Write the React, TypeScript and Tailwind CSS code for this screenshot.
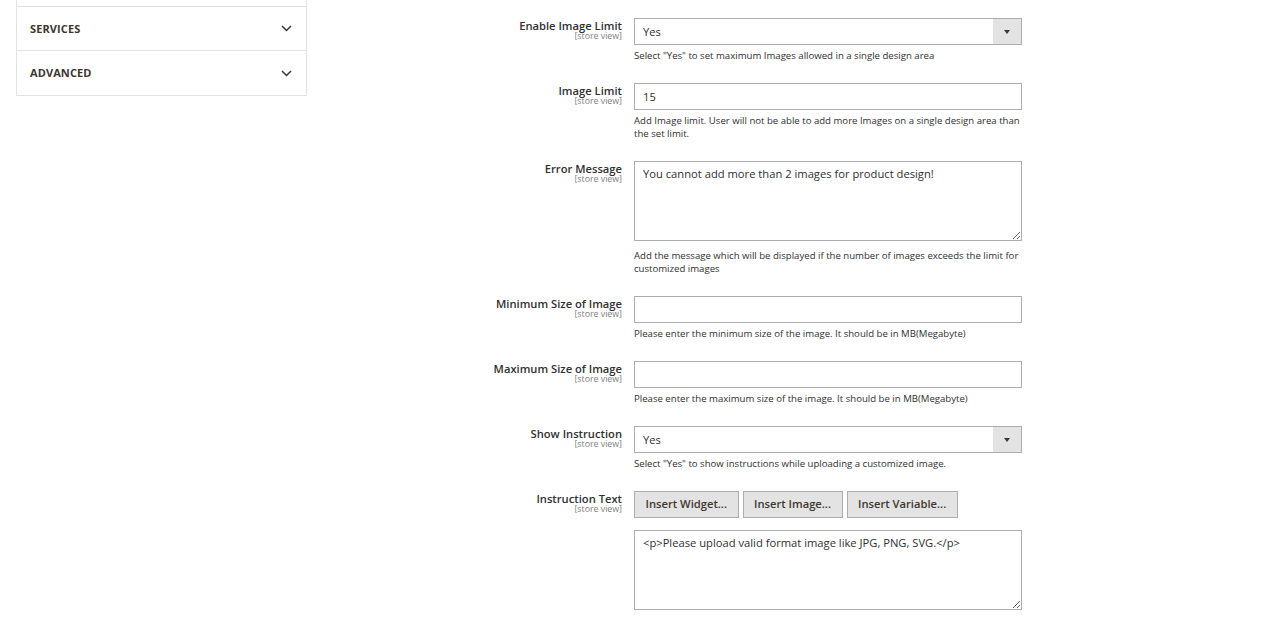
import React from "react";

const font = { fontFamily: '"Open Sans", "Liberation Sans", sans-serif' };

function Chevron() {
  return (
    <svg width="11" height="7" viewBox="0 0 11 7" className="text-[#41362f]">
      <polyline points="1,1 5.5,5.5 10,1" fill="none" stroke="currentColor" strokeWidth="1.5" />
    </svg>
  );
}

function Label({ text }: { text: string }) {
  return (
    <div className="w-[315px] shrink-0 text-right pt-[2px]">
      <div className="text-[11.2px] leading-[12px] font-semibold text-[#303030]">{text}</div>
      <div className="text-[8.8px] leading-[9px] text-[#808080]">[store view]</div>
    </div>
  );
}

function Note({ children }: { children: React.ReactNode }) {
  return <div className="mt-[4px] text-[9.6px] leading-[13px] text-[#303030]">{children}</div>;
}

function Select({ value }: { value: string }) {
  return (
    <div className="flex h-[27px] w-[388px] border border-[#adadad] bg-white">
      <div className="flex-1 flex items-center pl-[8px] pt-[1px] text-[11.2px] text-[#303030]">{value}</div>
      <div className="w-[28px] bg-[#e3e3e3] flex items-center justify-center">
        <svg width="6" height="4" viewBox="0 0 6 4">
          <polygon points="0,0 6,0 3,4" fill="#41362f" />
        </svg>
      </div>
    </div>
  );
}

function Input({ value }: { value?: string }) {
  return (
    <div className="flex items-center h-[27px] w-[388px] border border-[#adadad] bg-white pl-[8px] pt-[1px] text-[11.2px] text-[#303030]">
      {value}
    </div>
  );
}

function TextArea({ value }: { value: string }) {
  return (
    <textarea
      readOnly
      defaultValue={value}
      className="block h-[80px] w-[388px] border border-[#adadad] bg-white pl-[8px] pr-[8px] pt-[4px] text-[11.2px] leading-[15px] text-[#303030] outline-none"
      style={font}
    />
  );
}

function Btn({ text }: { text: string }) {
  return (
    <div className="h-[27px] flex items-center px-[10.5px] border border-[#adadad] bg-[#e3e3e3] text-[11.2px] font-semibold text-[#41362f]">
      {text}
    </div>
  );
}

export default function App() {
  return (
    <div className="flex w-full h-[620px] bg-white overflow-hidden" style={font}>
      <div className="ml-4 w-[291px] shrink-0 self-start border-x border-b border-[#e3e3e3]">
        <div className="h-[6px]" />
        <div className="h-[44px] border-t border-[#e3e3e3] flex items-center justify-between pl-[13px] pr-[14px]">
          <span className="text-[11px] font-bold text-[#41362f] tracking-[0.1px] pt-[2px]">SERVICES</span>
          <Chevron />
        </div>
        <div className="h-[45px] border-t border-[#e3e3e3] flex items-center justify-between pl-[13px] pr-[14px]">
          <span className="text-[11px] font-bold text-[#41362f] tracking-[0.1px]">ADVANCED</span>
          <Chevron />
        </div>
      </div>

      <div className="flex flex-col pt-[18px]">
        <div className="flex mb-[21px]">
          <Label text="Enable Image Limit" />
          <div className="ml-[12px]">
            <Select value="Yes" />
            <Note>Select "Yes" to set maximum Images allowed in a single design area</Note>
          </div>
        </div>

        <div className="flex mb-[21px]">
          <Label text="Image Limit" />
          <div className="ml-[12px] w-[388px]">
            <Input value="15" />
            <Note>Add Image limit. User will not be able to add more Images on a single design area than the set limit.</Note>
          </div>
        </div>

        <div className="flex mb-[21px]">
          <Label text="Error Message" />
          <div className="ml-[12px] w-[388px]">
            <TextArea value="You cannot add more than 2 images for product design!" />
            <div className="mt-[8px] text-[9.6px] leading-[13px] text-[#303030]">
              Add the message which will be displayed if the number of images exceeds the limit for customized images
            </div>
          </div>
        </div>

        <div className="flex mb-[21px]">
          <Label text="Minimum Size of Image" />
          <div className="ml-[12px] w-[388px]">
            <Input />
            <Note>Please enter the minimum size of the image. It should be in MB(Megabyte)</Note>
          </div>
        </div>

        <div className="flex mb-[21px]">
          <Label text="Maximum Size of Image" />
          <div className="ml-[12px] w-[388px]">
            <Input />
            <Note>Please enter the maximum size of the image. It should be in MB(Megabyte)</Note>
          </div>
        </div>

        <div className="flex mb-[21px]">
          <Label text="Show Instruction" />
          <div className="ml-[12px] w-[388px]">
            <Select value="Yes" />
            <Note>Select "Yes" to show instructions while uploading a customized image.</Note>
          </div>
        </div>

        <div className="flex">
          <Label text="Instruction Text" />
          <div className="ml-[12px] w-[388px]">
            <div className="flex gap-[4px]">
              <Btn text="Insert Widget..." />
              <Btn text="Insert Image..." />
              <Btn text="Insert Variable..." />
            </div>
            <div className="mt-[12px]">
              <TextArea value="<p>Please upload valid format image like JPG, PNG, SVG.</p>" />
            </div>
          </div>
        </div>
      </div>
    </div>
  );
}
